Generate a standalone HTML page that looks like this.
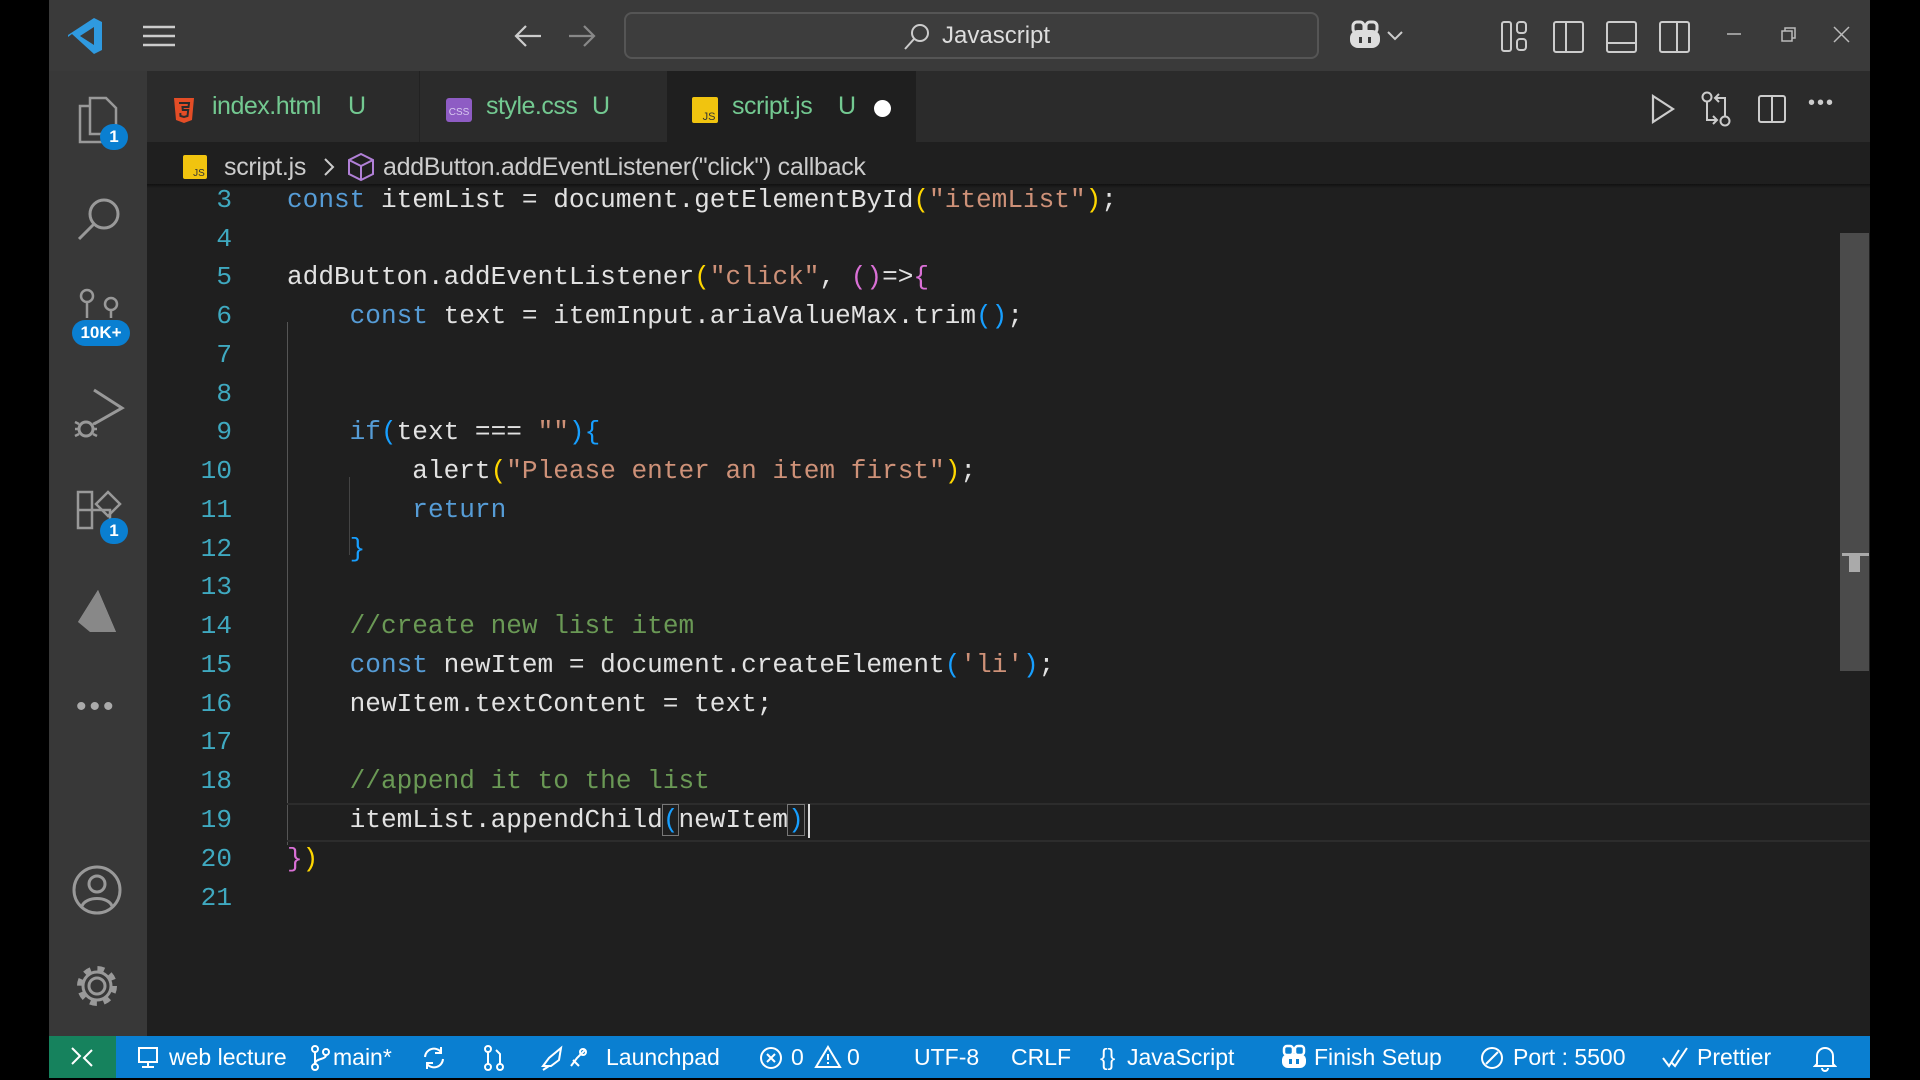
<!DOCTYPE html>
<html><head><meta charset="utf-8"><style>
*{margin:0;padding:0;box-sizing:border-box}
body{width:1920px;height:1080px;background:#000;position:relative;overflow:hidden;font-family:"Liberation Sans",sans-serif}
.a{position:absolute}
#title{left:49px;top:0;width:1821px;height:71px;background:#3a3a3a}
#act{left:49px;top:71px;width:98px;height:965px;background:#383838}
#tabs{left:147px;top:71px;width:1723px;height:71px;background:#2b2b2b}
#ed{left:147px;top:142px;width:1723px;height:894px;background:#1f1f1f}
#status{left:49px;top:1036px;width:1821px;height:42px;background:#0a7fd1;color:#fff;font-size:23px}
.tab{position:absolute;top:71px;height:71px;font-size:25px;color:#73c991;display:flex;align-items:center;letter-spacing:-0.5px}
.ln{position:absolute;left:150px;width:82px;text-align:right;font:26.1px "Liberation Mono",monospace;color:#3fa9c0;height:39px;line-height:39px}
.cd{position:absolute;left:287px;font:26.1px "Liberation Mono",monospace;color:#e2e2e2;white-space:pre;height:39px;line-height:39px}
.k{color:#569cd6}.s{color:#ce9178}.c{color:#6a9955}.y{color:#ffd700}.p{color:#da70d6}.b{color:#179fff}
.st{position:absolute;top:0;height:42px;line-height:42px;white-space:nowrap}
.badge{position:absolute;background:#0a7fd1;color:#fff;border-radius:14px;font-weight:bold;font-size:17px;text-align:center;line-height:26px;height:26px}
svg{position:absolute}
</style></head><body>
<div class="a" id="title"></div>
<div class="a" id="act"></div>
<div class="a" id="tabs"></div>
<div class="a" id="ed"></div>

<!-- title bar -->
<svg style="left:66px;top:16px" width="38" height="40" viewBox="0 0 38 40"><path d="M28 2 L36 6 V34 L28 38 L6 18 L2 21 V19 L28 2Z M28 11 L14 20 L28 29Z" fill="#2f9ae0"/></svg>
<svg style="left:141px;top:24px" width="36" height="24"><path d="M2 3H34M2 12H34M2 21H34" stroke="#ccc" stroke-width="2.5"/></svg>
<svg style="left:513px;top:24px" width="30" height="24"><path d="M28 12H3M13 2L3 12L13 22" stroke="#ccc" stroke-width="2.2" fill="none"/></svg>
<svg style="left:567px;top:24px" width="30" height="24"><path d="M2 12H27M17 2L27 12L17 22" stroke="#888" stroke-width="2.2" fill="none"/></svg>
<div class="a" style="left:624px;top:12px;width:695px;height:47px;border:2px solid #555;border-radius:8px;background:#3d3d3d"></div>
<svg style="left:902px;top:22px" width="30" height="30"><circle cx="18" cy="11" r="8" stroke="#ccc" stroke-width="2" fill="none"/><path d="M12 17L3 27" stroke="#ccc" stroke-width="2"/></svg>
<div class="a" style="left:942px;top:22px;font-size:24px;color:#ddd">Javascript</div>
<svg style="left:1347px;top:20px" width="36" height="32"><rect x="3" y="10" width="30" height="18" rx="8" fill="#ddd"/><rect x="6" y="2" width="11" height="11" rx="4" fill="none" stroke="#ddd" stroke-width="3"/><rect x="19" y="2" width="11" height="11" rx="4" fill="none" stroke="#ddd" stroke-width="3"/><rect x="12" y="17" width="3" height="6" fill="#3a3a3a"/><rect x="21" y="17" width="3" height="6" fill="#3a3a3a"/></svg>
<svg style="left:1386px;top:30px" width="18" height="12"><path d="M2 2L9 9L16 2" stroke="#ccc" stroke-width="2" fill="none"/></svg>
<svg style="left:1500px;top:20px" width="30" height="36"><rect x="2" y="2" width="9" height="29" rx="2" stroke="#ccc" stroke-width="2" fill="none"/><rect x="17" y="2" width="9" height="11" rx="3" stroke="#ccc" stroke-width="2" fill="none"/><rect x="17" y="19" width="9" height="11" rx="3" stroke="#ccc" stroke-width="2" fill="none"/></svg>
<svg style="left:1552px;top:20px" width="34" height="36"><rect x="2" y="2" width="29" height="30" rx="2" stroke="#ccc" stroke-width="2" fill="none"/><path d="M14 2V32" stroke="#ccc" stroke-width="2"/></svg>
<svg style="left:1605px;top:20px" width="34" height="36"><rect x="2" y="2" width="29" height="30" rx="2" stroke="#ccc" stroke-width="2" fill="none"/><path d="M2 23H31" stroke="#ccc" stroke-width="2"/></svg>
<svg style="left:1658px;top:20px" width="34" height="36"><rect x="2" y="2" width="29" height="30" rx="2" stroke="#ccc" stroke-width="2" fill="none"/><path d="M19 2V32" stroke="#ccc" stroke-width="2"/></svg>
<svg style="left:1725px;top:30px" width="18" height="8"><path d="M2 4H16" stroke="#bbb" stroke-width="1.5"/></svg>
<svg style="left:1780px;top:26px" width="18" height="18"><rect x="2" y="5" width="10" height="10" stroke="#bbb" stroke-width="1.5" fill="none"/><path d="M5 5V2H15V12H12" stroke="#bbb" stroke-width="1.5" fill="none"/></svg>
<svg style="left:1832px;top:25px" width="20" height="20"><path d="M2 2L17 17M17 2L2 17" stroke="#bbb" stroke-width="1.5"/></svg>

<!-- activity bar -->
<svg style="left:76px;top:96px" width="46" height="52"><path d="M14 10H4V46H26V38" stroke="#999" stroke-width="2.5" fill="none"/><path d="M14 2H30L40 12V38H14Z" stroke="#999" stroke-width="2.5" fill="none"/></svg>
<div class="badge" style="left:100px;top:124px;width:28px">1</div>
<svg style="left:76px;top:194px" width="48" height="50"><circle cx="28" cy="20" r="14" stroke="#999" stroke-width="3" fill="none"/><path d="M18 30L3 45" stroke="#999" stroke-width="3"/></svg>
<svg style="left:78px;top:288px" width="44" height="30"><circle cx="9" cy="8" r="6" stroke="#999" stroke-width="2.5" fill="none"/><circle cx="33" cy="16" r="6" stroke="#999" stroke-width="2.5" fill="none"/><path d="M9 14V30M33 22V30" stroke="#999" stroke-width="2.5"/></svg>
<div class="badge" style="left:72px;top:320px;width:58px">10K+</div>
<svg style="left:70px;top:386px" width="56" height="56"><path d="M24 4L52 22L24 38" stroke="#999" stroke-width="3" fill="none"/><circle cx="16" cy="43" r="7" stroke="#999" stroke-width="3" fill="none"/><path d="M5 36L9 38M5 43H9M5 50L9 48M27 36L23 38M27 43H23M27 50L23 48" stroke="#999" stroke-width="2.5"/></svg>
<svg style="left:74px;top:488px" width="54" height="54"><path d="M4 4H18V40H4ZM4 22H36V40" stroke="#999" stroke-width="2.5" fill="none"/><path d="M34 4L46 16L34 28L22 16Z" stroke="#999" stroke-width="2.5" fill="none"/></svg>
<div class="badge" style="left:100px;top:518px;width:28px">1</div>
<svg style="left:76px;top:588px" width="44" height="50"><path d="M22 2L40 44L2 34Z" fill="#aaa"/><path d="M22 2L2 34L14 44L40 44Z" fill="#888"/></svg>
<div class="a" style="left:76px;top:690px;font-size:30px;color:#aaa;letter-spacing:3px">•••</div>
<svg style="left:71px;top:864px" width="52" height="52"><circle cx="26" cy="26" r="23" stroke="#999" stroke-width="3" fill="none"/><circle cx="26" cy="20" r="8" stroke="#999" stroke-width="3" fill="none"/><path d="M11 42C15 32 37 32 41 42" stroke="#999" stroke-width="3" fill="none"/></svg>
<svg style="left:71px;top:960px" width="52" height="52"><circle cx="26" cy="26" r="8" stroke="#999" stroke-width="3" fill="none"/><circle cx="26" cy="26" r="17" stroke="#999" stroke-width="6" stroke-dasharray="6.7 6.7" fill="none"/><circle cx="26" cy="26" r="14" stroke="#999" stroke-width="3" fill="none"/></svg>

<!-- tabs -->
<div class="a" style="left:667px;top:71px;width:249px;height:71px;background:#1f1f1f"></div>
<div class="a" style="left:419px;top:71px;width:1px;height:71px;background:#222"></div>
<svg style="left:172px;top:96px" width="24" height="28"><path d="M2 2H22L20 24L12 27L4 24Z" fill="#e44d26"/><path d="M7 7H17L16.5 11H10.5L10.8 14H16.2L15.5 20L12 21L8.5 20L8.3 17" stroke="#2b2b2b" stroke-width="2" fill="none"/></svg>
<div class="tab" style="left:212px">index.html</div><div class="tab" style="left:348px">U</div>
<svg style="left:446px;top:98px" width="26" height="24"><rect width="26" height="24" rx="3" fill="#8e5cc4"/><text x="13" y="17" font-size="10" fill="#d8c8f0" text-anchor="middle" font-family="Liberation Sans">CSS</text></svg>
<div class="tab" style="left:486px">style.css</div><div class="tab" style="left:592px">U</div>
<svg style="left:692px;top:97px" width="26" height="26"><rect width="26" height="26" rx="2" fill="#f1c40f"/><text x="17" y="23" font-size="11" fill="#333" text-anchor="middle" font-family="Liberation Sans">JS</text></svg>
<div class="tab" style="left:732px">script.js</div><div class="tab" style="left:838px">U</div>
<div class="a" style="left:874px;top:100px;width:17px;height:17px;border-radius:50%;background:#fff"></div>
<svg style="left:1650px;top:94px" width="26" height="30"><path d="M3 2L23 15L3 28Z" stroke="#ccc" stroke-width="2.2" fill="none"/></svg>
<svg style="left:1700px;top:90px" width="32" height="38"><circle cx="7" cy="7" r="4.5" stroke="#ccc" stroke-width="2" fill="none"/><circle cx="25" cy="31" r="4.5" stroke="#ccc" stroke-width="2" fill="none"/><path d="M7 12V30H17M13 26L17 30L13 34M25 26V8H15M19 4L15 8L19 12" stroke="#ccc" stroke-width="2" fill="none"/></svg>
<svg style="left:1757px;top:94px" width="30" height="30"><rect x="2" y="2" width="26" height="26" rx="2" stroke="#ccc" stroke-width="2" fill="none"/><path d="M15 2V28" stroke="#ccc" stroke-width="2"/></svg>
<div class="a" style="left:1808px;top:92px;font-size:20px;color:#ccc;letter-spacing:2px">•••</div>

<!-- breadcrumb -->
<div class="a" style="left:147px;top:184px;width:1723px;height:4px;background:linear-gradient(#111,#1f1f1f)"></div>
<svg style="left:183px;top:155px" width="24" height="24"><rect width="24" height="24" rx="2" fill="#f1c40f"/><text x="16" y="21" font-size="10" fill="#333" text-anchor="middle" font-family="Liberation Sans">JS</text></svg>
<div class="a" style="left:224px;top:153px;font-size:25px;color:#ccc;letter-spacing:-0.3px">script.js</div>
<svg style="left:322px;top:156px" width="14" height="22"><path d="M3 3L11 11L3 19" stroke="#ccc" stroke-width="2" fill="none"/></svg>
<svg style="left:347px;top:152px" width="28" height="30"><path d="M14 2L26 8V22L14 28L2 22V8Z M2 8L14 14L26 8 M14 14V28" stroke="#b180d7" stroke-width="2" fill="none"/></svg>
<div class="a" style="left:383px;top:153px;font-size:25px;color:#ccc;letter-spacing:-0.3px">addButton.addEventListener("click") callback</div>

<!-- editor -->
<div class="a" style="left:287px;top:322px;width:1px;height:523px;background:#555"></div>
<div class="a" style="left:349px;top:477px;width:1px;height:78px;background:#444"></div>
<div class="a" style="left:287px;top:803px;width:1583px;height:39px;border-top:2px solid #2c2c2c;border-bottom:2px solid #2c2c2c"></div>
<div class="a" style="left:1840px;top:233px;width:29px;height:438px;background:#4b4b4b"></div>
<div class="a" style="left:1842px;top:553px;width:27px;height:3px;background:#aaa"></div>
<div class="a" style="left:1849px;top:555px;width:11px;height:17px;background:#aaa"></div>

<div class="ln" style="top:181px">3</div><div class="cd" style="top:181px"><span class="k">const</span> itemList = document.getElementById<span class="y">(</span><span class="s">"itemList"</span><span class="y">)</span>;</div>
<div class="ln" style="top:220px">4</div>
<div class="ln" style="top:258px">5</div><div class="cd" style="top:258px">addButton.addEventListener<span class="y">(</span><span class="s">"click"</span>, <span class="p">()</span>=&gt;<span class="p">{</span></div>
<div class="ln" style="top:297px">6</div><div class="cd" style="top:297px">    <span class="k">const</span> text = itemInput.ariaValueMax.trim<span class="b">()</span>;</div>
<div class="ln" style="top:336px">7</div>
<div class="ln" style="top:375px">8</div>
<div class="ln" style="top:413px">9</div><div class="cd" style="top:413px">    <span class="k">if</span><span class="b">(</span>text === <span class="s">""</span><span class="b">){</span></div>
<div class="ln" style="top:452px">10</div><div class="cd" style="top:452px">        alert<span class="y">(</span><span class="s">"Please enter an item first"</span><span class="y">)</span>;</div>
<div class="ln" style="top:491px">11</div><div class="cd" style="top:491px">        <span class="k">return</span></div>
<div class="ln" style="top:530px">12</div><div class="cd" style="top:530px">    <span class="b">}</span></div>
<div class="ln" style="top:568px">13</div>
<div class="ln" style="top:607px">14</div><div class="cd" style="top:607px">    <span class="c">//create new list item</span></div>
<div class="ln" style="top:646px">15</div><div class="cd" style="top:646px">    <span class="k">const</span> newItem = document.createElement<span class="b">(</span><span class="s">'li'</span><span class="b">)</span>;</div>
<div class="ln" style="top:685px">16</div><div class="cd" style="top:685px">    newItem.textContent = text;</div>
<div class="ln" style="top:723px">17</div>
<div class="ln" style="top:762px">18</div><div class="cd" style="top:762px">    <span class="c">//append it to the list</span></div>
<div class="ln" style="top:801px">19</div><div class="cd" style="top:801px">    itemList.appendChild<span class="b" style="outline:1px solid #777">(</span>newItem<span class="b" style="outline:1px solid #777">)</span></div>
<div class="a" style="left:808px;top:804px;width:2px;height:34px;background:#ddd"></div>
<div class="ln" style="top:840px">20</div><div class="cd" style="top:840px"><span class="p">}</span><span class="y">)</span></div>
<div class="ln" style="top:879px">21</div>

<!-- status -->
<div class="a" id="status">
<div class="a" style="left:0;top:0;width:67px;height:42px;background:#16825d"></div>
<svg style="left:20px;top:9px" width="26" height="24"><path d="M3 3L11 11L3 19M23 5L15 13L23 21" stroke="#fff" stroke-width="2" fill="none"/></svg>
<svg style="left:88px;top:10px" width="22" height="24"><rect x="2" y="2" width="18" height="14" stroke="#fff" stroke-width="2" fill="none"/><path d="M5 21H17M11 16V21" stroke="#fff" stroke-width="2"/></svg>
<div class="st" style="left:120px">web lecture</div>
<svg style="left:260px;top:8px" width="22" height="28"><circle cx="6" cy="5" r="3" stroke="#fff" stroke-width="2" fill="none"/><circle cx="6" cy="23" r="3" stroke="#fff" stroke-width="2" fill="none"/><circle cx="17" cy="8" r="3" stroke="#fff" stroke-width="2" fill="none"/><path d="M6 8V20M17 11C17 16 6 14 6 20" stroke="#fff" stroke-width="2" fill="none"/></svg>
<div class="st" style="left:284px">main*</div>
<svg style="left:372px;top:9px" width="26" height="26"><path d="M4 12A9 9 0 0 1 20 7M22 14A9 9 0 0 1 6 19" stroke="#fff" stroke-width="2" fill="none"/><path d="M20 2V8H14M6 24V18H12" stroke="#fff" stroke-width="2" fill="none"/></svg>
<svg style="left:433px;top:8px" width="24" height="28"><circle cx="6" cy="5" r="3" stroke="#fff" stroke-width="2" fill="none"/><circle cx="6" cy="23" r="3" stroke="#fff" stroke-width="2" fill="none"/><circle cx="18" cy="23" r="3" stroke="#fff" stroke-width="2" fill="none"/><path d="M6 8V20M18 20V10L14 6" stroke="#fff" stroke-width="2" fill="none"/></svg>
<svg style="left:490px;top:8px" width="50" height="28"><path d="M4 22L10 14L22 4L20 16L12 22Z M10 22L4 26" stroke="#fff" stroke-width="2" fill="none"/><path d="M32 22L38 14L46 6M34 16L40 22" stroke="#fff" stroke-width="2" fill="none"/><circle cx="44" cy="8" r="3" stroke="#fff" stroke-width="2" fill="none"/></svg>
<div class="st" style="left:557px">Launchpad</div>
<svg style="left:709px;top:9px" width="26" height="26"><circle cx="13" cy="13" r="10" stroke="#fff" stroke-width="2" fill="none"/><path d="M9 9L17 17M17 9L9 17" stroke="#fff" stroke-width="2"/></svg>
<div class="st" style="left:742px">0</div>
<svg style="left:765px;top:8px" width="28" height="26"><path d="M14 3L26 23H2Z M14 10V16M14 18V20" stroke="#fff" stroke-width="2" fill="none"/></svg>
<div class="st" style="left:798px">0</div>
<div class="st" style="left:865px">UTF-8</div>
<div class="st" style="left:962px">CRLF</div>
<div class="st" style="left:1051px">{}</div>
<div class="st" style="left:1078px">JavaScript</div>
<svg style="left:1230px;top:8px" width="30" height="26"><rect x="3" y="10" width="24" height="14" rx="6" fill="#fff"/><rect x="5" y="2" width="9" height="9" rx="3" fill="none" stroke="#fff" stroke-width="2.5"/><rect x="16" y="2" width="9" height="9" rx="3" fill="none" stroke="#fff" stroke-width="2.5"/><rect x="10" y="15" width="3" height="5" fill="#0a7fd1"/><rect x="17" y="15" width="3" height="5" fill="#0a7fd1"/></svg>
<div class="st" style="left:1265px">Finish Setup</div>
<svg style="left:1430px;top:9px" width="26" height="26"><circle cx="13" cy="13" r="10" stroke="#fff" stroke-width="2" fill="none"/><path d="M19 7L7 19" stroke="#fff" stroke-width="2"/></svg>
<div class="st" style="left:1464px">Port : 5500</div>
<svg style="left:1612px;top:10px" width="30" height="24"><path d="M2 12L8 20L18 4M10 16L14 20L26 2" stroke="#fff" stroke-width="2" fill="none"/></svg>
<div class="st" style="left:1648px">Prettier</div>
<svg style="left:1764px;top:8px" width="24" height="28"><path d="M4 20V12A8 8 0 0 1 20 12V20L22 22H2Z M9 24A3 3 0 0 0 15 24" stroke="#fff" stroke-width="2" fill="none"/></svg>
</div>
</body></html>
